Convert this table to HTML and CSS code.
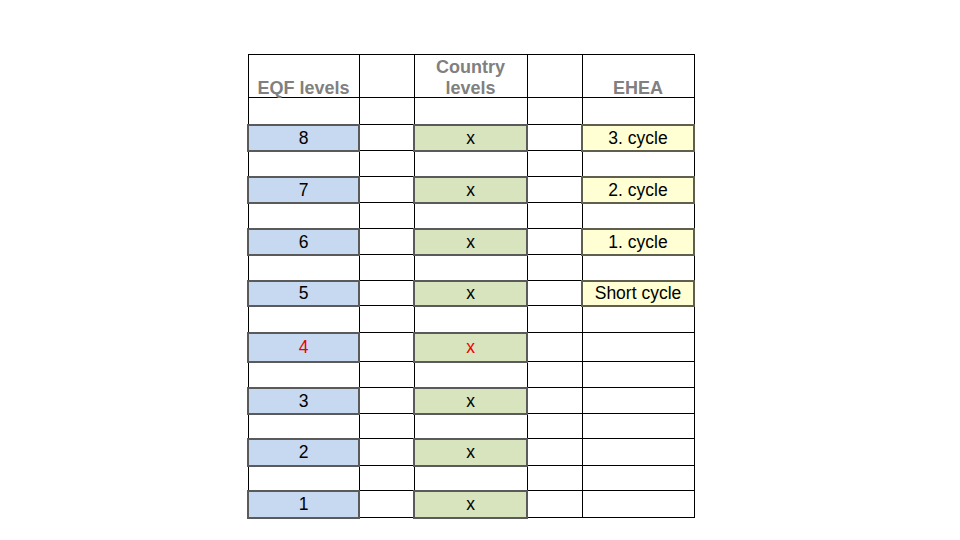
FILE: index.html
```html
<!DOCTYPE html>
<html>
<head>
<meta charset="utf-8">
<link rel="stylesheet" href="styles.css">
</head>
<body>
<div class="page">
<table class="levels">
  <colgroup>
    <col class="c-a"><col class="c-narrow"><col class="c-b"><col class="c-narrow"><col class="c-c">
  </colgroup>
  <tr class="h-head">
    <th><span class="hl">EQF levels</span></th><th></th><th><span class="hl">Country<br>levels</span></th><th></th><th><span class="hl">EHEA</span></th>
  </tr>
  <tr class="h27"><td></td><td></td><td></td><td></td><td></td></tr>
  <tr class="h26"><td class="eqf">8</td><td></td><td class="cty">x</td><td></td><td class="ehea">3. cycle</td></tr>
  <tr class="h26"><td></td><td></td><td></td><td></td><td></td></tr>
  <tr class="h26"><td class="eqf">7</td><td></td><td class="cty">x</td><td></td><td class="ehea">2. cycle</td></tr>
  <tr class="h26"><td></td><td></td><td></td><td></td><td></td></tr>
  <tr class="h26"><td class="eqf">6</td><td></td><td class="cty">x</td><td></td><td class="ehea">1. cycle</td></tr>
  <tr class="h26"><td></td><td></td><td></td><td></td><td></td></tr>
  <tr class="h25"><td class="eqf">5</td><td></td><td class="cty">x</td><td></td><td class="ehea">Short cycle</td></tr>
  <tr class="h27"><td></td><td></td><td></td><td></td><td></td></tr>
  <tr class="h29"><td class="eqf red">4</td><td></td><td class="cty red">x</td><td></td><td></td></tr>
  <tr class="h26"><td></td><td></td><td></td><td></td><td></td></tr>
  <tr class="h26"><td class="eqf">3</td><td></td><td class="cty">x</td><td></td><td></td></tr>
  <tr class="h25"><td></td><td></td><td></td><td></td><td></td></tr>
  <tr class="h27"><td class="eqf">2</td><td></td><td class="cty">x</td><td></td><td></td></tr>
  <tr class="h25"><td></td><td></td><td></td><td></td><td></td></tr>
  <tr class="h27"><td class="eqf">1</td><td></td><td class="cty">x</td><td></td><td></td></tr>
</table>
</div>
</body>
</html>
```
FILE: styles.css
```css
html, body {
  margin: 0;
  padding: 0;
  background: #ffffff;
}
body {
  width: 960px;
  height: 540px;
  overflow: hidden;
  font-family: "Liberation Sans", Arial, sans-serif;
}
.page {
  padding: 54px 0 0 247px;
}
.levels {
  border-collapse: collapse;
  table-layout: fixed;
  width: 446px;
}
.c-a { width: 111px; }
.c-b { width: 113px; }
.c-c { width: 112px; }
.c-narrow { width: 55px; }
.levels th,
.levels td {
  border: 1px solid #000000;
  padding: 0;
  text-align: center;
  font-size: 17.5px;
  color: #000000;
  line-height: 18px;
}
.levels th {
  vertical-align: bottom;
  font-weight: bold;
  font-size: 18px;
  color: #808080;
  line-height: 21px;
  padding-bottom: 0;
}
.hl {
  display: block;
  margin-bottom: -2px;
}
.levels td { vertical-align: middle; }
.h-head { height: 43px; }
.h25 { height: 25px; }
.h26 { height: 26px; }
.h27 { height: 27px; }
.h29 { height: 29px; }
.levels td.eqf {
  background: #c6d9f1;
  border: 2px solid #5a5a5a;
}
.levels td.cty {
  background: #d7e4bd;
  border: 2px solid #5a5a5a;
}
.levels td.ehea {
  background: #ffffd3;
  border: 2px solid #5f5f50;
}
.levels td.red { color: #ee0000; }
```
